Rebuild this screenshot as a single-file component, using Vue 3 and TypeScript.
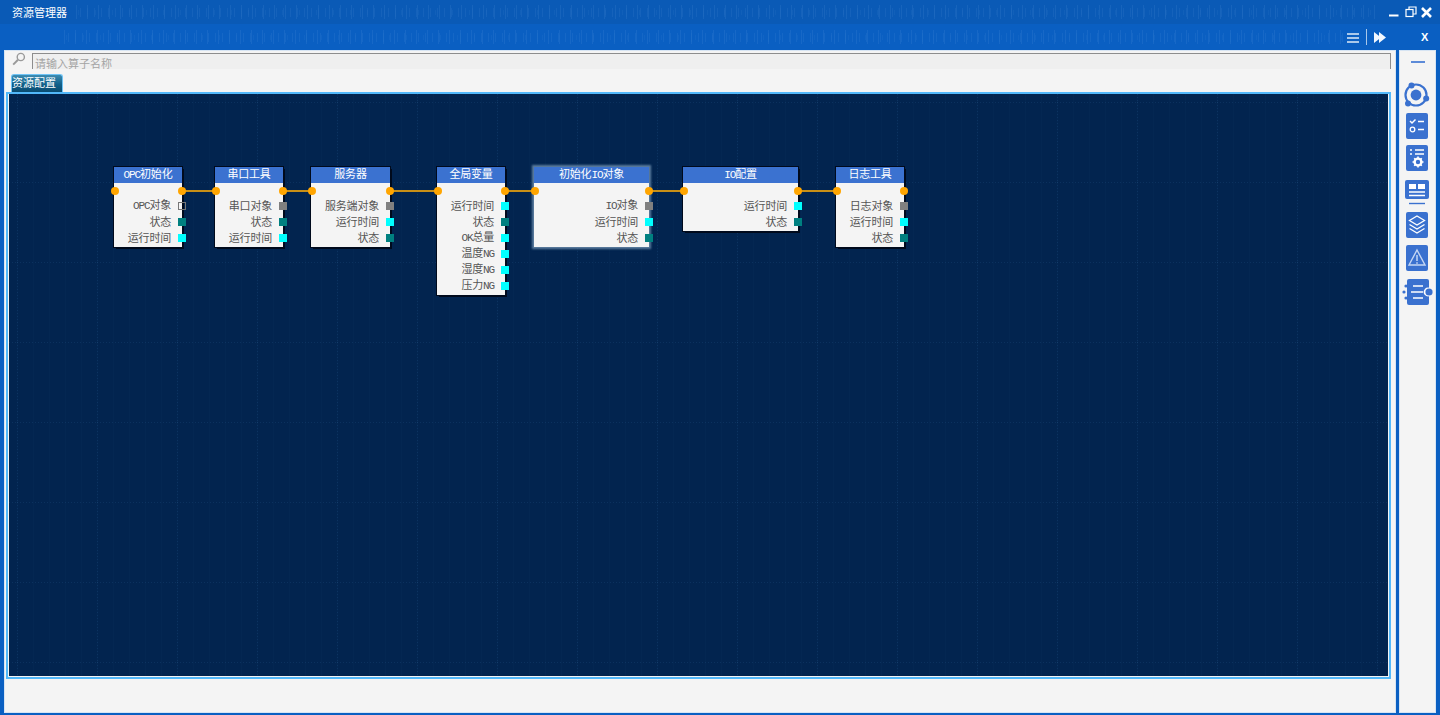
<script setup lang="ts">
interface Port { label: string; kind: 'hollow' | 'gray' | 'teal' | 'cyan' }
interface GraphNode { id: number; title: string; x: number; w: number; active?: boolean; ports: Port[] }

const nodes: GraphNode[] = [
  { id: 1, title: 'OPC初始化', x: 114, w: 68, ports: [
    { label: 'OPC对象', kind: 'hollow' }, { label: '状态', kind: 'teal' }, { label: '运行时间', kind: 'cyan' } ] },
  { id: 2, title: '串口工具', x: 215, w: 68, ports: [
    { label: '串口对象', kind: 'gray' }, { label: '状态', kind: 'teal' }, { label: '运行时间', kind: 'cyan' } ] },
  { id: 3, title: '服务器', x: 311, w: 79, ports: [
    { label: '服务端对象', kind: 'gray' }, { label: '运行时间', kind: 'cyan' }, { label: '状态', kind: 'teal' } ] },
  { id: 4, title: '全局变量', x: 437, w: 68, ports: [
    { label: '运行时间', kind: 'cyan' }, { label: '状态', kind: 'teal' }, { label: 'OK总量', kind: 'cyan' },
    { label: '温度NG', kind: 'cyan' }, { label: '湿度NG', kind: 'cyan' }, { label: '压力NG', kind: 'cyan' } ] },
  { id: 5, title: '初始化IO对象', x: 534, w: 115, active: true, ports: [
    { label: 'IO对象', kind: 'gray' }, { label: '运行时间', kind: 'cyan' }, { label: '状态', kind: 'teal' } ] },
  { id: 6, title: 'IO配置', x: 683, w: 115, ports: [
    { label: '运行时间', kind: 'cyan' }, { label: '状态', kind: 'teal' } ] },
  { id: 7, title: '日志工具', x: 836, w: 68, ports: [
    { label: '日志对象', kind: 'gray' }, { label: '运行时间', kind: 'cyan' }, { label: '状态', kind: 'teal' } ] },
]

const links = nodes.slice(0, -1).map((n, i) => ({ x1: n.x + n.w, x2: nodes[i + 1].x }))

function parts(t: string): { s: string; latin: boolean }[] {
  return t.split(/([A-Za-z0-9]+)/).filter(Boolean).map(s => ({ s, latin: /^[A-Za-z0-9]/.test(s) }))
}
</script>

<template>
  <div class="win">
    <header class="titlebar">
      <span class="title">资源管理器</span>
      <div class="wave" />
      <div class="winbtns">
        <svg width="10" height="10" viewBox="0 0 10 10"><path d="M0 8.5h9.5" stroke="#fff" stroke-width="2" /></svg>
        <svg width="12" height="12" viewBox="0 0 12 12" fill="none" stroke="#fff" stroke-width="1.2"><rect x="1" y="3.5" width="7" height="7" /><path d="M4 3.5V1h7v7H8" /></svg>
        <svg class="x-btn" width="11" height="11" viewBox="0 0 11 11"><path d="M1 1l9 9M10 1l-9 9" stroke="#fff" stroke-width="2.6" /></svg>
      </div>
    </header>
    <div class="toolbar">
      <div class="wave wave2" />
      <svg class="tool-ic ham" width="12" height="12" viewBox="0 0 12 12"><path d="M0 2h12M0 6h12M0 10h12" stroke="#a9c8ea" stroke-width="2" /></svg>
      <span class="tool-sep" />
      <svg class="tool-ic" width="12" height="11" viewBox="0 0 12 11" fill="#f2f8ff"><path d="M0 0l7 5.5L0 11zM5 0l7 5.5L5 11z" /></svg>
      <span class="tool-x">X</span>
    </div>
    <div class="body">
      <main class="panel">
        <div class="search">
          <svg class="search-ic" width="14" height="14" viewBox="0 0 14 14" fill="none"><circle cx="8.8" cy="5" r="3.6" stroke="#9a9a9a" stroke-width="1.4" /><path d="M6 7.8L1.2 12.6" stroke="#9a9a9a" stroke-width="2" /></svg>
          <div class="search-input">请输入算子名称</div>
        </div>
        <div class="tabs"><div class="tab">资源配置</div></div>
        <div class="canvas-frame">
          <div class="canvas">
            <svg class="grid" width="100%" height="100%">
              <defs>
                <pattern id="minor" width="16" height="80" patternUnits="userSpaceOnUse" x="8" y="8">
                  <path d="M0.5 0V80" stroke="#2a5a92" stroke-opacity=".05" />
                </pattern>
                <pattern id="major" width="80" height="80" patternUnits="userSpaceOnUse" x="8" y="8">
                  <path d="M0 0.5H80M0.5 0V80" stroke="#2f6399" stroke-opacity=".2" stroke-dasharray="1 2" />
                </pattern>
              </defs>
              <rect width="100%" height="100%" fill="url(#minor)" />
              <rect width="100%" height="100%" fill="url(#major)" />
            </svg>
            <div v-for="(l, i) in links" :key="i" class="link" :style="{ left: l.x1 + 'px', width: l.x2 - l.x1 + 'px' }" />
            <div
              v-for="n in nodes"
              :key="n.id"
              class="node"
              :class="{ active: n.active }"
              :style="{ left: n.x + 'px', width: n.w + 'px' }"
            >
              <div class="node-head">
                <template v-for="(p, i) in parts(n.title)" :key="i"><span :class="{ latin: p.latin }">{{ p.s }}</span></template>
              </div>
              <i class="dot dot-in" />
              <i class="dot dot-out" />
              <div class="node-body">
                <div v-for="port in n.ports" :key="port.label" class="row">
                  <span class="row-label">
                    <template v-for="(p, i) in parts(port.label)" :key="i"><span :class="{ latin: p.latin }">{{ p.s }}</span></template>
                  </span>
                  <i class="sq" :class="port.kind" />
                </div>
              </div>
            </div>
          </div>
        </div>
      </main>
      <aside class="side">
        <span class="side-dash" />
        <svg class="orbit" width="28" height="28" viewBox="0 0 28 28">
          <circle cx="14" cy="14" r="10.5" fill="none" stroke="#3a71cf" stroke-width="2.2" />
          <circle cx="14" cy="14" r="5.4" fill="#3a71cf" />
          <circle cx="9.5" cy="4.5" r="3" fill="#3a71cf" />
          <circle cx="24.2" cy="17.5" r="3" fill="#3a71cf" />
          <circle cx="6" cy="22.5" r="3" fill="#3a71cf" />
        </svg>
        <svg class="sbtn s1" viewBox="0 0 22 26">
          <rect width="22" height="26" rx="2" fill="#3a71cf" />
          <path d="M4 8l2 2 3.5-3.5" fill="none" stroke="#fff" stroke-width="1.5" />
          <path d="M12 8.5h6M12 16.5h6" stroke="#fff" stroke-width="1.5" />
          <circle cx="6.5" cy="16.5" r="2.3" fill="none" stroke="#fff" stroke-width="1.3" />
        </svg>
        <svg class="sbtn s2" viewBox="0 0 22 26">
          <rect width="22" height="26" rx="2" fill="#3a71cf" />
          <path d="M9 5h9M9 9h9M4 5h2M4 9h2" stroke="#fff" stroke-width="1.4" />
          <circle cx="12" cy="17" r="3.4" fill="none" stroke="#fff" stroke-width="2.4" />
          <path d="M12 11.5v2M12 20.5v2M6.5 17h2M15.5 17h2M8.2 13.2l1.3 1.3M14.5 19.5l1.3 1.3M15.8 13.2l-1.3 1.3M9.5 19.5l-1.3 1.3" stroke="#fff" stroke-width="1.6" />
        </svg>
        <svg class="sbtn s3" viewBox="0 0 24 25">
          <rect width="24" height="19" rx="2" fill="#3a71cf" />
          <path d="M4 4h7v5H4zM13 4h7v5h-7z" fill="#fff" />
          <path d="M4 12h16M4 15.5h16" stroke="#fff" stroke-width="1.4" />
          <path d="M4 23.5h16" stroke="#3a71cf" stroke-width="1.4" />
        </svg>
        <svg class="sbtn s4" viewBox="0 0 22 26">
          <rect width="22" height="26" rx="2" fill="#3a71cf" />
          <g fill="none" stroke="#fff" stroke-width="1.3">
            <path d="M11 4l7.5 4.5L11 13 3.5 8.5z" />
            <path d="M3.5 12.5L11 17l7.5-4.5M3.5 16.5L11 21l7.5-4.5" />
          </g>
        </svg>
        <svg class="sbtn s5" viewBox="0 0 22 26">
          <rect width="22" height="26" rx="2" fill="#3a71cf" />
          <path d="M11 5l8 15H3z" fill="none" stroke="#c4d6f4" stroke-width="1.4" />
          <path d="M11 10v6M11 17.2v1.6" stroke="#c4d6f4" stroke-width="1.5" />
        </svg>
        <svg class="flow" width="32" height="26" viewBox="0 0 32 26">
          <rect x="5" width="22" height="26" rx="2" fill="#3a71cf" />
          <path d="M11 7h10M9 13h12M11 19h10" stroke="#fff" stroke-width="1.6" />
          <circle cx="26" cy="13" r="4.4" fill="#fff" />
          <circle cx="27" cy="13" r="3.6" fill="#3a71cf" />
          <circle cx="4" cy="7" r="1.6" fill="#3a71cf" /><circle cx="2" cy="13" r="1.6" fill="#3a71cf" /><circle cx="4" cy="19" r="1.6" fill="#3a71cf" />
        </svg>
      </aside>
    </div>
  </div>
</template>

<style>
html, body { margin: 0; overflow: hidden; }
</style>

<style scoped>
.win {
  width: 1440px;
  height: 715px;
  background: #0a5fc2;
  display: flex;
  flex-direction: column;
  font-family: "Noto Sans CJK SC", "Liberation Sans", sans-serif;
  overflow: hidden;
}
.titlebar {
  height: 24px;
  flex: none;
  display: flex;
  align-items: center;
  padding: 0 8px 0 12px;
  box-sizing: border-box;
  background: #0a5ab6;
}
.title { color: #fff; font-size: 11px; width: 64px; flex: none; }
.wave {
  flex: 1;
  height: 14px;
  opacity: 0.2;
  background-image:
    repeating-linear-gradient(90deg, rgba(120,175,235,.6) 0 1px, transparent 1px 11px),
    repeating-linear-gradient(90deg, transparent 0 4px, rgba(120,175,235,.5) 4px 5px, transparent 5px 7px),
    repeating-linear-gradient(90deg, transparent 0 2px, rgba(120,175,235,.35) 2px 3px, transparent 3px 17px);
  background-size: 100% 14px, 100% 9px, 100% 5px;
  background-position: 0 center;
  background-repeat: no-repeat;
}
.winbtns { display: flex; align-items: center; gap: 6px; margin-left: 14px; }
.x-btn { margin-left: -2px; }
.toolbar {
  height: 26px;
  flex: none;
  display: flex;
  align-items: center;
  padding: 0 11px 0 64px;
  box-sizing: border-box;
}
.wave2 { margin-right: 3px; }
.tool-ic { flex: none; }
.ham { margin-top: 2px; }
.tool-sep { width: 1px; height: 16px; background: #a9c8ea; margin: 0 7px; flex: none; }
.tool-x { color: #fff; font: bold 11px "Liberation Sans", sans-serif; margin-left: 35px; width: 8px; }
.body { flex: 1; display: flex; min-height: 0; padding: 0 4px 2px 4px; gap: 3px; }
.panel {
  flex: 1;
  min-width: 0;
  background: #f4f4f4;
  box-shadow: inset 0 0 0 1px #d6e4f3;
  display: flex;
  flex-direction: column;
  padding: 0 5px 0 2px;
  box-sizing: border-box;
}
.search { height: 20px; flex: none; display: flex; align-items: center; padding-left: 6px; gap: 6px; }
.search-ic { flex: none; margin-top: -2px; }
.search-input {
  flex: 1;
  height: 16px;
  margin-top: 2px;
  box-sizing: border-box;
  background: #efefef;
  border-left: 1px solid #8d8d8d;
  border-right: 1px solid #8d8d8d;
  border-top: 1px solid #8d8d8d;
  color: #a4a4a4;
  font-size: 11px;
  line-height: 18px;
  padding-left: 2px;
}
.tabs { height: 22px; flex: none; padding: 4px 0 0 5px; box-sizing: border-box; }
.tab {
  width: 52px;
  height: 18px;
  box-sizing: border-box;
  border: 1px solid #6fc3f5;
  border-bottom: none;
  border-radius: 3px 3px 0 0;
  background: linear-gradient(#3d8cb2, #11608a 55%, #0a4b70);
  color: #fff;
  font-size: 11px;
  line-height: 15px;
  white-space: nowrap;
  overflow: hidden;
}
.canvas-frame {
  height: 587px;
  flex: none;
  border: 2px solid #52b8fa;
  padding: 0 1px 1px;
  box-sizing: border-box;
  background: #f4f4f4;
}
.canvas {
  position: relative;
  height: 100%;
  background-color: #02244f;
  overflow: hidden;
}
.grid { position: absolute; inset: 0; }
.link {
  position: absolute;
  top: 96px;
  height: 2px;
  background: #c88f16;
  margin-left: -9px;
}
.node {
  position: absolute;
  top: 73px;
  margin-left: -9px;
  background: #f4f4f4;
  box-shadow: 2px 2px 0 #000a1c, -1px -1px 0 #000a1c, 1px -1px 0 #000a1c, -1px 1px 0 #000a1c;
  color: #555;
}
.node.active { box-shadow: 0 0 2px 2px #5c7d9e; }
.node-head {
  height: 16px;
  background: #3b72d0;
  color: #fff;
  font-size: 11px;
  line-height: 13px;
  text-align: center;
  letter-spacing: -0.2px;
}
.dot {
  position: absolute;
  top: 20px;
  width: 8px;
  height: 8px;
  border-radius: 50%;
  background: #ffa500;
}
.dot-in { left: -3px; }
.dot-out { right: -4px; }
.node-body { padding: 15px 0 1px; }
.row {
  height: 16px;
  position: relative;
  display: flex;
  justify-content: flex-end;
  align-items: center;
  padding-right: 11px;
}
.row-label { font-size: 11px; letter-spacing: -0.2px; line-height: 14px; margin-top: -2px; white-space: nowrap; }
.latin { font-family: "Liberation Mono", monospace; font-size: 11px; letter-spacing: -1.1px; }
.sq {
  position: absolute;
  right: -4px;
  top: 4px;
  width: 8px;
  height: 8px;
  box-sizing: border-box;
}
.sq.gray { background: #808080; }
.sq.teal { background: #008080; }
.sq.cyan { background: #00ffff; }
.sq.hollow { background: transparent; border: 1px solid #777; }
.side {
  width: 37px;
  flex: none;
  background: #f4f4f4;
  box-shadow: inset 0 0 0 1px #d6e4f3;
  box-sizing: border-box;
  display: flex;
  flex-direction: column;
  align-items: center;
}
.side-dash { width: 14px; height: 2px; background: #5d8bd8; margin-top: 11px; flex: none; }
.orbit { margin-top: 18px; margin-left: -4px; flex: none; }
.sbtn { width: 22px; height: 26px; display: block; flex: none; margin-left: -2px; }
.s1 { margin-top: 4px; }
.s2 { margin-top: 6px; }
.s3 { width: 24px; height: 25px; margin-top: 9px; }
.s4 { margin-top: 7px; }
.s5 { margin-top: 7px; }
.flow { margin-top: 8px; flex: none; }
</style>
